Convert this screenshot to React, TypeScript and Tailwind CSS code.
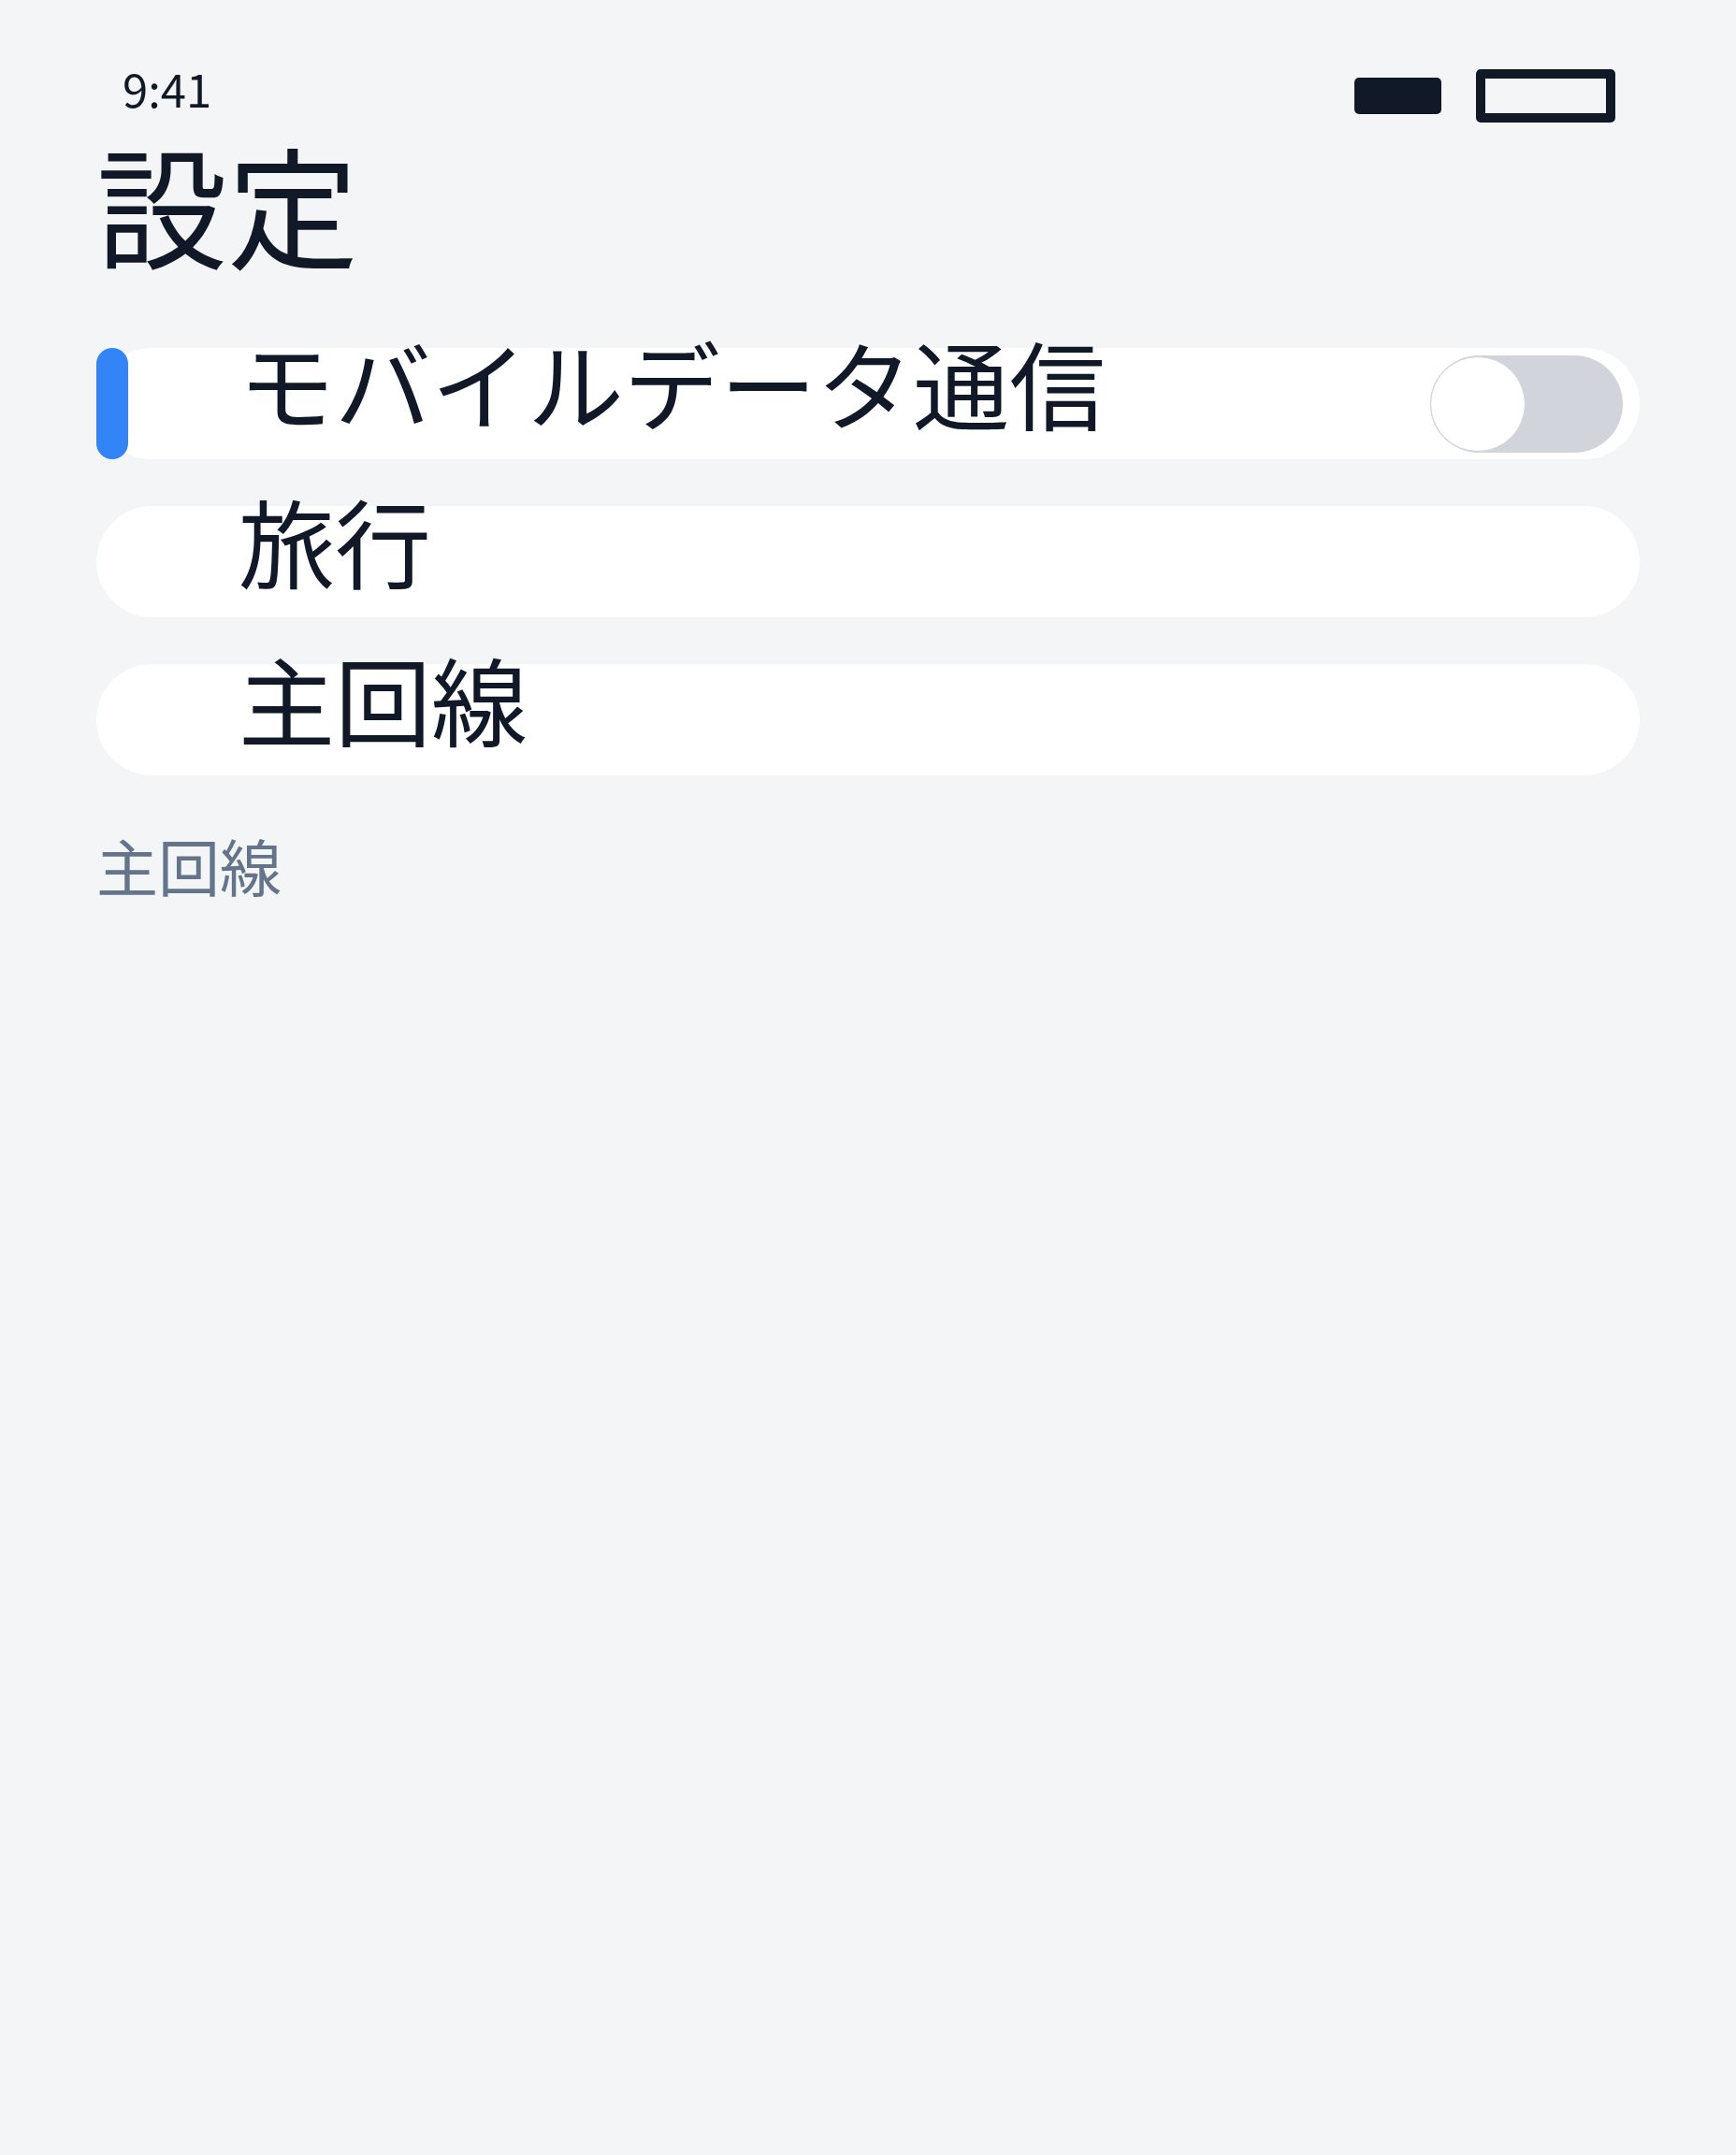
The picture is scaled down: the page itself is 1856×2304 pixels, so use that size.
import React from "react";

const FONT = "font-['Noto_Sans_CJK_JP','Noto_Sans',sans-serif]";

function Row({ label, active, toggle }: { label: string; active?: boolean; toggle?: boolean }) {
  return (
    <div className="relative flex h-[119px] items-center justify-between rounded-full bg-white pl-[152px] pr-[18px]">
      {active && <div className="absolute left-0 top-0 h-full w-[34px] rounded-full bg-[#3384f6]" />}
      <span className="mb-[46px] text-[103px] leading-none text-[#111827]">{label}</span>
      {toggle && (
        <div className="flex h-[104px] w-[206px] items-center rounded-full bg-[#d1d5db]">
          <div className="h-[102px] w-[102px] rounded-full border border-[#cfd3d8] bg-white" />
        </div>
      )}
    </div>
  );
}

export default function App() {
  return (
    <div className={`min-h-[2304px] bg-[#f4f5f7] px-[103px] pt-[58px] ${FONT}`}>
      <div className="flex h-[88px] items-center justify-between pl-[28px] pr-[26px]">
        <span className="mb-[18px] text-[49px] leading-none text-[#111827]">9:41</span>
        <div className="flex items-center gap-[37px]">
          <div className="h-[39px] w-[93px] rounded-[5px] bg-[#111827]" />
          <div className="h-[57px] w-[149px] rounded-[5px] border-[10px] border-[#111827]" />
        </div>
      </div>
      <h1 className="text-[140px] font-normal leading-none text-[#111827]">設定</h1>
      <div className="mt-[86px] flex flex-col gap-[50px]">
        <Row label="モバイルデータ通信" active toggle />
        <Row label="旅行" />
        <Row label="主回線" />
      </div>
      <p className="mt-[62px] text-[66px] leading-none text-[#64748b]">主回線</p>
    </div>
  );
}
